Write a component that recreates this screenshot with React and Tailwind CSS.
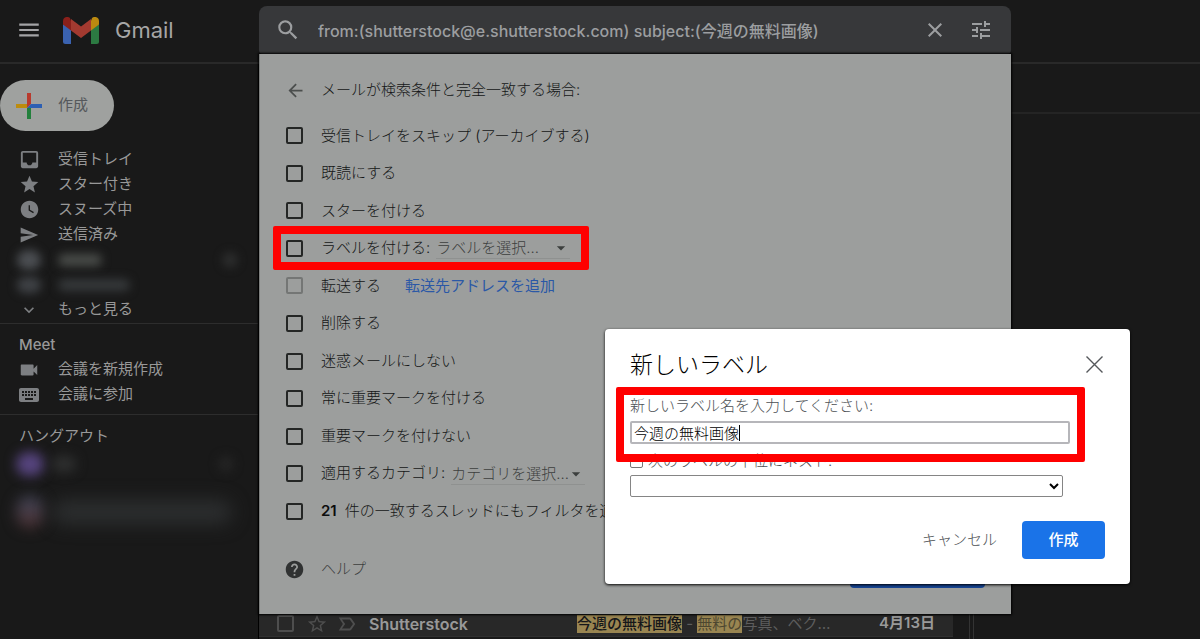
import { useState } from "react";
import {
	MdArrowBack,
	MdArrowDropDown,
	MdClose,
	MdExpandMore,
	MdHelp,
	MdInbox,
	MdKeyboard,
	MdLabelImportantOutline,
	MdMenu,
	MdSearch,
	MdSend,
	MdStar,
	MdStarBorder,
	MdTune,
	MdVideocam,
	MdWatchLater,
} from "react-icons/md";

const mailLinks = [
	{ label: "受信トレイ", icon: MdInbox, size: 23 },
	{ label: "スター付き", icon: MdStar, size: 21 },
	{ label: "スヌーズ中", icon: MdWatchLater, size: 21 },
	{ label: "送信済み", icon: MdSend, size: 20 },
];

const meetLinks = [
	{ label: "会議を新規作成", icon: MdVideocam, size: 22 },
	{ label: "会議に参加", icon: MdKeyboard, size: 24 },
];

const filterActions = [
	{ id: "skip", label: "受信トレイをスキップ (アーカイブする)" },
	{ id: "read", label: "既読にする" },
	{ id: "star", label: "スターを付ける" },
	{
		id: "label",
		label: "ラベルを付ける:",
		select: "ラベルを選択...",
		highlighted: true,
	},
	{
		id: "forward",
		label: "転送する",
		link: "転送先アドレスを追加",
		disabled: true,
	},
	{ id: "delete", label: "削除する" },
	{ id: "not-spam", label: "迷惑メールにしない" },
	{ id: "important", label: "常に重要マークを付ける" },
	{ id: "not-important", label: "重要マークを付けない" },
	{
		id: "category",
		label: "適用するカテゴリ:",
		select: "カテゴリを選択...",
	},
	{
		id: "apply",
		count: "21",
		label: "件の一致するスレッドにもフィルタを適用します。",
	},
];

function GmailLogo() {
	return (
		<svg viewBox="0 0 36 27" className="w-9 h-[27px]" aria-hidden="true">
			<path d="M0 7v17.500a2.500 2.500 0 0 0 2.500 2.500H8V12z" fill="#3a62b0" />
			<path d="M28 12v15h5.500a2.500 2.500 0 0 0 2.500-2.500V7z" fill="#2c7a42" />
			<path d="M8 4v9.500L0 7.500V4C0 .3 4-1.300 7 1z" fill="#8a201b" />
			<path d="M28 4v9.500l8-6V4c0-3.700-4-5.300-7-3z" fill="#bb8a10" />
			<path d="M8 13.500V2l10 7.500L28 2v11.500L18 21z" fill="#a33a30" />
		</svg>
	);
}

function PlusIcon() {
	return (
		<svg viewBox="0 0 26 26" className="w-[26px] h-[26px]" aria-hidden="true">
			<path d="M11 0h4v11l-4 4z" fill="#b93a2d" />
			<path d="M0 11h11v4H0z" fill="#bd8c0e" />
			<path d="M15 11h11v4H11z" fill="#2c5fb3" />
			<path d="M11 15h4v11h-4z" fill="#23803c" />
		</svg>
	);
}

function NavItem({ label, icon: Icon, size }) {
	return (
		<li>
			<a href="#" className="flex items-center gap-[17px] h-[25px]">
				<span className="flex justify-center w-6 text-[#7d7f82]">
					<Icon size={size} />
				</span>
				{label}
			</a>
		</li>
	);
}

function Sidebar() {
	return (
		<aside className="w-[258px] shrink-0 pt-4 text-[15px] text-[#989898]">
			<button
				type="button"
				className="flex items-center gap-4 h-[51px] pl-4 pr-[26px] rounded-full bg-[#9fa19f] text-[#55585b]"
			>
				<PlusIcon />
				作成
			</button>

			<nav className="mt-4 pb-px border-b border-[#2d2d2d]">
				<ul className="pl-[17px]">
					{mailLinks.map((item) => (
						<NavItem key={item.label} {...item} />
					))}
					<li className="flex items-center gap-[17px] h-[25px]">
						<span className="w-6 h-5 rounded-full bg-[#4b4e52] blur-[5px]" />
						<span className="w-11 h-3 rounded-full bg-[#4a4d4a] blur-[5px]" />
						<span className="w-4 h-4 ml-auto mr-5 rounded-full bg-[#2b2c2c] blur-[4px]" />
					</li>
					<li className="flex items-center gap-[17px] h-[25px]">
						<span className="w-6 h-4 rounded-full bg-[#3f4246] blur-[5px]" />
						<span className="w-18 h-3 rounded-full bg-[#36393b] blur-[5px]" />
					</li>
					<NavItem label="もっと見る" icon={MdExpandMore} size={20} />
				</ul>
			</nav>

			<section className="pt-2 pb-[7px] border-b border-[#2d2d2d]">
				<h2 className="pl-[19px] leading-[25px] font-medium">Meet</h2>
				<ul className="pl-[17px]">
					{meetLinks.map((item) => (
						<NavItem key={item.label} {...item} />
					))}
				</ul>
			</section>

			<section className="pt-2">
				<h2 className="pl-[19px] leading-[25px]">ハングアウト</h2>
				<div className="flex items-center gap-2 h-8 pl-4">
					<span className="w-7 h-6 rounded-full bg-[#56447e] blur-[6px]" />
					<span className="w-6 h-4 rounded-full bg-[#2f3030] blur-[6px]" />
					<span className="w-4 h-4 ml-auto mr-6 rounded-full bg-[#242424] blur-[5px]" />
				</div>
				<div className="flex items-center gap-2 h-16 pl-4">
					<span className="w-7 h-8 rounded-full bg-linear-to-b from-[#40465a] to-[#4b2f30] blur-[7px]" />
					<span className="w-[180px] h-6 rounded-full bg-[#2c2e2f] blur-[9px]" />
				</div>
			</section>
		</aside>
	);
}

function InlineSelect({ placeholder, label }) {
	return (
		<span className="relative flex items-center ml-[6px] text-[#3c3f3e]">
			<select
				aria-label={label}
				className="w-[134px] h-[22px] appearance-none border-b border-[#8f9190]"
			>
				<option>{placeholder}</option>
			</select>
			<MdArrowDropDown
				size={20}
				className="absolute -right-px pointer-events-none"
			/>
		</span>
	);
}

function FilterRow({ action }) {
	return (
		<div className="relative flex items-center">
			<input
				type="checkbox"
				id={action.id}
				disabled={action.disabled}
				className="w-[17px] h-[17px] shrink-0 appearance-none border-2 border-[#242625] rounded-xs disabled:border-[#747675]"
			/>
			<label htmlFor={action.id} className="pl-[18px] whitespace-nowrap">
				{action.count && (
					<b className="mr-2 font-semibold text-[#0c0d0d]">{action.count}</b>
				)}
				{action.label}
			</label>
			{action.select && (
				<InlineSelect placeholder={action.select} label={action.label} />
			)}
			{action.link && (
				<a href="#" className="ml-6 font-normal text-[#2b58a6]">
					{action.link}
				</a>
			)}
			{action.highlighted && (
				<span className="absolute -left-[13px] w-[316px] h-11 border-8 border-[#ff0000] rounded-xs pointer-events-none" />
			)}
		</div>
	);
}

function FilterPanel() {
	return (
		<div className="absolute top-full inset-x-0 pt-[17px] pb-[26px] pl-[26px] pr-[26px] bg-[#9c9e9d] border-l border-[#7c7e7d] text-[15px] font-light text-[#141616] shadow-[0_0_2px_1px_#000]">
			<div className="flex items-center h-[38px]">
				<button type="button" aria-label="戻る" className="text-[#4b4e4d]">
					<MdArrowBack size={21} className="-ml-px" />
				</button>
				<p className="pl-[15px]">メールが検索条件と完全一致する場合:</p>
			</div>
			<div className="grid auto-rows-fr h-[413px] mt-2">
				{filterActions.map((action) => (
					<FilterRow key={action.id} action={action} />
				))}
			</div>
			<div className="flex items-center justify-between h-[37px] mt-[21px]">
				<a href="#" className="flex items-center gap-4 text-[#3c3f3e]">
					<MdHelp size={21} className="-ml-[2px] text-[#303232]" />
					ヘルプ
				</a>
				<button
					type="button"
					className="h-full px-[15px] rounded-sm bg-[#174696] text-[#9c9e9d]"
				>
					フィルタを作成
				</button>
			</div>
		</div>
	);
}

function Header() {
	const [query, setQuery] = useState(
		"from:(shutterstock@e.shutterstock.com) subject:(今週の無料画像)",
	);

	return (
		<header className="flex items-start h-16 shrink-0 pt-[6px] border-b-2 border-[#292929]">
			<div className="flex items-center w-[259px] h-12 shrink-0 pl-4 text-[#a4a4a6]">
				<button type="button" aria-label="メインメニュー">
					<MdMenu size={26} />
				</button>
				<a href="#" className="flex items-center gap-4 ml-[21px]">
					<GmailLogo />
					<span className="text-[22px] text-[#a6a6a6]">Gmail</span>
				</a>
			</div>
			<div className="relative z-10 flex-1 max-w-[752px] h-12">
				<form className="flex items-center h-full pl-4 pr-[18px] rounded-t-lg rounded-b-sm bg-[#37383a] text-[#9c9ea0]">
					<button type="button" aria-label="検索">
						<MdSearch size={26} />
					</button>
					<input
						type="text"
						aria-label="メールを検索"
						value={query}
						onChange={(e) => setQuery(e.target.value)}
						className="flex-1 min-w-0 mx-[17px] pt-[2px] text-base font-medium outline-none"
					/>
					<button type="button" aria-label="検索をクリア" className="mr-[22px]">
						<MdClose size={24} />
					</button>
					<button type="button" aria-label="検索オプションを表示">
						<MdTune size={24} />
					</button>
				</form>
				<FilterPanel />
			</div>
		</header>
	);
}

function MailRow() {
	return (
		<div className="flex items-center h-[26px] mr-4 mb-[2px] pl-[18px] pr-[18px] bg-[#282828] border-b border-[#303030] text-[#999]">
			<input
				type="checkbox"
				aria-label="選択"
				className="w-[17px] h-[17px] shrink-0 appearance-none border-2 border-[#4e4e4e] rounded-xs"
			/>
			<MdStarBorder size={22} className="shrink-0 ml-3 text-[#4e4e4e]" />
			<MdLabelImportantOutline
				size={22}
				className="shrink-0 ml-2 text-[#4e4e4e]"
			/>
			<span className="w-[208px] shrink-0 ml-[11px] text-base font-semibold">
				Shutterstock
			</span>
			<p className="flex-1 min-w-0 truncate text-[15px] leading-[18px] text-[#5d5d5d]">
				<mark className="bg-[#998551] font-medium text-[#16171a]">
					今週の無料画像
				</mark>
				{" - "}
				<mark className="bg-[#998551] text-[#4d4730]">無料の</mark>
				写真、ベク…
			</p>
			<time className="shrink-0 text-[15px] font-semibold">4月13日</time>
		</div>
	);
}

function NewLabelDialog() {
	const [name, setName] = useState("今週の無料画像");

	return (
		<div
			role="dialog"
			aria-labelledby="dialog-title"
			className="absolute z-20 top-[329px] right-[70px] w-[525px] pt-[21px] px-[25px] pb-[25px] rounded-sm bg-white text-[15px] font-light text-[#4c5054] shadow-[0_1px_3px_#000]"
		>
			<div className="flex items-start justify-between h-[31px]">
				<h2 id="dialog-title" className="text-[23px] leading-[31px] text-black">
					新しいラベル
				</h2>
				<button type="button" aria-label="閉じる" className="mt-[6px] mr-[2px]">
					<svg
						viewBox="0 0 17 17"
						className="block w-[17px] h-[17px]"
						stroke="#55585b"
						strokeWidth="1.4"
					>
						<path d="M.5.5l16 16M16.500.5l-16 16" />
					</svg>
				</button>
			</div>

			<div className="relative mt-[14px]">
				<label htmlFor="label-name" className="block leading-[22px]">
					新しいラベル名を入力してください:
				</label>
				<div className="relative mt-1 mr-[35px]">
					<input
						type="text"
						id="label-name"
						value={name}
						onChange={(e) => setName(e.target.value)}
						className="block w-full h-[23px] px-[2px] border-2 border-[#b6b6ba] rounded-xs text-black outline-none"
					/>
					{/* text caret */}
					<span className="absolute left-[109px] top-1 w-px h-4 bg-black" />
				</div>
				<span className="absolute -top-2 -left-[14px] right-5 h-[75px] z-10 border-8 border-[#ff0000] rounded-xs pointer-events-none" />
			</div>

			<label className="flex items-center gap-[5px] h-[22px] mt-[6px]">
				<input
					type="checkbox"
					className="w-[13px] h-[13px] appearance-none border border-[#767676] rounded-xs"
				/>
				次のラベルの下位にネスト:
			</label>
			<select
				aria-label="次のラベルの下位にネスト"
				className="block w-[433px] h-[22px] mt-[3px] bg-white border border-[#858585] rounded-xs text-black"
			>
				<option></option>
			</select>

			<div className="flex items-center justify-end gap-[25px] mt-6">
				<button type="button">キャンセル</button>
				<button
					type="button"
					className="w-[83px] h-[38px] rounded-sm bg-[#1a73e8] font-medium text-white"
				>
					作成
				</button>
			</div>
		</div>
	);
}

export default function App() {
	return (
		<div className="relative flex flex-col h-screen overflow-hidden bg-[#191919] font-['Inter','Noto_Sans_CJK_JP',sans-serif]">
			<Header />
			<div className="flex flex-1 min-h-0">
				<Sidebar />
				<div className="flex flex-col flex-1 min-w-0 border-l border-black">
					<div className="h-[50px] shrink-0 border-b-2 border-[#242424]" />
					<div className="flex flex-1">
						<main className="flex flex-col justify-end flex-1 min-w-0">
							<MailRow />
						</main>
						<aside className="w-[231px] pl-[3px] border-l border-[#333]">
							<div className="h-full border-l border-[#333]" />
						</aside>
					</div>
				</div>
			</div>
			<NewLabelDialog />
		</div>
	);
}
